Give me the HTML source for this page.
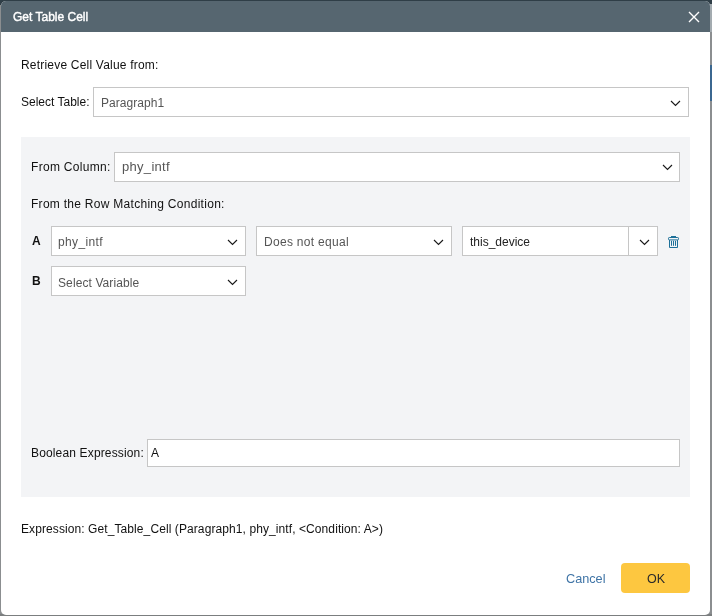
<!DOCTYPE html>
<html><head><meta charset="utf-8">
<style>
*{margin:0;padding:0;box-sizing:border-box}
html,body{width:712px;height:616px;overflow:hidden}
body{background:#8b8e90;font-family:"Liberation Sans",sans-serif;font-size:12px;color:#111;position:relative}
.abs{position:absolute}
.dlg{position:absolute;left:1px;top:1px;width:709px;height:613.5px;background:#fff;border-radius:5px;overflow:hidden}
.hdr{position:absolute;left:0;top:0;width:709px;height:30.5px;background:#566670}
.t{position:absolute;white-space:nowrap;line-height:14px;will-change:transform}
.box{position:absolute;background:#fff;border:1px solid #c6c6c6}
.panel{position:absolute;left:21px;top:137px;width:669px;height:360px;background:#f3f4f6}
.chev{position:absolute;width:11px;height:7px}
.val{color:#555}
</style></head><body>
<div class="abs" style="left:0;top:0;width:712px;height:1px;background:#2f3e47"></div>
<div class="abs" style="left:0;top:0;width:6px;height:5px;background:#2f3e47"></div>
<div class="abs" style="left:705px;top:0;width:7px;height:4px;background:#2f3e47"></div>
<div class="abs" style="left:710px;top:4px;width:2px;height:28px;background:#a3abb0"></div>
<div class="abs" style="left:710px;top:65px;width:2px;height:36px;background:#3b6790"></div>
<div class="abs" style="left:0;top:614px;width:712px;height:2px;background:#7b7e7f"></div>
<div class="dlg">
  <div class="hdr"></div>
</div>
<!-- header -->
<div class="t" style="left:12.5px;top:10px;color:#fff;font-size:12px;-webkit-text-stroke:0.4px #fff">Get Table Cell</div>
<svg class="abs" style="left:688px;top:11px" width="12" height="12" viewBox="0 0 12 12"><path d="M1 1L11 11M11 1L1 11" stroke="#fff" stroke-width="1.4"/></svg>

<div class="t" style="left:21px;top:57.5px;letter-spacing:0.2px">Retrieve Cell Value from:</div>
<div class="t" style="left:21px;top:94.5px">Select Table:</div>
<div class="box" style="left:93px;top:87px;width:596px;height:30px"></div>
<div class="t val" style="left:101px;top:95.5px;letter-spacing:0.05px">Paragraph1</div>
<svg class="chev" style="left:670px;top:100px" viewBox="0 0 11 7"><path d="M1 1L5.5 5.5L10 1" fill="none" stroke="#1a1a1a" stroke-width="1.15"/></svg>

<div class="panel"></div>
<div class="t" style="left:31px;top:159.5px;letter-spacing:0.3px">From Column:</div>
<div class="box" style="left:114px;top:152px;width:566px;height:30px"></div>
<div class="t val" style="left:121.5px;top:159.5px;font-size:13px;letter-spacing:0.3px">phy_intf</div>
<svg class="chev" style="left:662px;top:164px" viewBox="0 0 11 7"><path d="M1 1L5.5 5.5L10 1" fill="none" stroke="#1a1a1a" stroke-width="1.15"/></svg>

<div class="t" style="left:31px;top:197px;letter-spacing:0.28px">From the Row Matching Condition:</div>

<div class="t" style="left:31.5px;top:234px;font-weight:bold">A</div>
<div class="box" style="left:51px;top:226px;width:195px;height:30px"></div>
<div class="t val" style="left:58px;top:235px;letter-spacing:0.35px">phy_intf</div>
<svg class="chev" style="left:227px;top:239px" viewBox="0 0 11 7"><path d="M1 1L5.5 5.5L10 1" fill="none" stroke="#1a1a1a" stroke-width="1.15"/></svg>

<div class="box" style="left:256px;top:226px;width:196px;height:30px"></div>
<div class="t val" style="left:264px;top:235px;letter-spacing:0.3px">Does not equal</div>
<svg class="chev" style="left:433px;top:239px" viewBox="0 0 11 7"><path d="M1 1L5.5 5.5L10 1" fill="none" stroke="#1a1a1a" stroke-width="1.15"/></svg>

<div class="box" style="left:462px;top:226px;width:196px;height:30px"></div>
<div class="abs" style="left:628px;top:227px;width:1px;height:28px;background:#c6c6c6"></div>
<div class="t" style="left:470px;top:235px;color:#222">this_device</div>
<svg class="chev" style="left:639px;top:239px" viewBox="0 0 11 7"><path d="M1 1L5.5 5.5L10 1" fill="none" stroke="#1a1a1a" stroke-width="1.15"/></svg>

<svg class="abs" style="left:664px;top:232px" width="20" height="20" viewBox="0 0 20 20" fill="none" stroke="#1d7099" stroke-width="1">
<rect x="7" y="4" width="5" height="1.3" fill="#1d7099" stroke="none"/>
<rect x="4.5" y="5.5" width="10" height="2.4" rx="0.8"/>
<path d="M5.5 8V15.5H13.5V8"/>
<path d="M7.5 8.8V13.8M9.5 8.8V13.8M11.5 8.8V13.8"/>
</svg>

<div class="t" style="left:31.5px;top:274px;font-weight:bold">B</div>
<div class="box" style="left:51px;top:266px;width:195px;height:30px"></div>
<div class="t val" style="left:58px;top:275.5px;letter-spacing:0.1px">Select Variable</div>
<svg class="chev" style="left:227px;top:279px" viewBox="0 0 11 7"><path d="M1 1L5.5 5.5L10 1" fill="none" stroke="#1a1a1a" stroke-width="1.15"/></svg>

<div class="t" style="left:31px;top:446px;letter-spacing:0.15px">Boolean Expression:</div>
<div class="box" style="left:147px;top:439px;width:533px;height:28px"></div>
<div class="t" style="left:151px;top:446px">A</div>

<div class="t" style="left:21px;top:522px;letter-spacing:0.09px">Expression: Get_Table_Cell (Paragraph1, phy_intf, &lt;Condition: A&gt;)</div>

<div class="t" style="left:566px;top:571.5px;color:#3f74a6;font-size:12.7px">Cancel</div>
<div class="abs" style="left:621px;top:563px;width:69px;height:30px;background:#fdc740;border-radius:4px"></div>
<div class="t" style="left:647px;top:571.5px;font-size:12.5px;color:#2a2a2a">OK</div>
</body></html>
